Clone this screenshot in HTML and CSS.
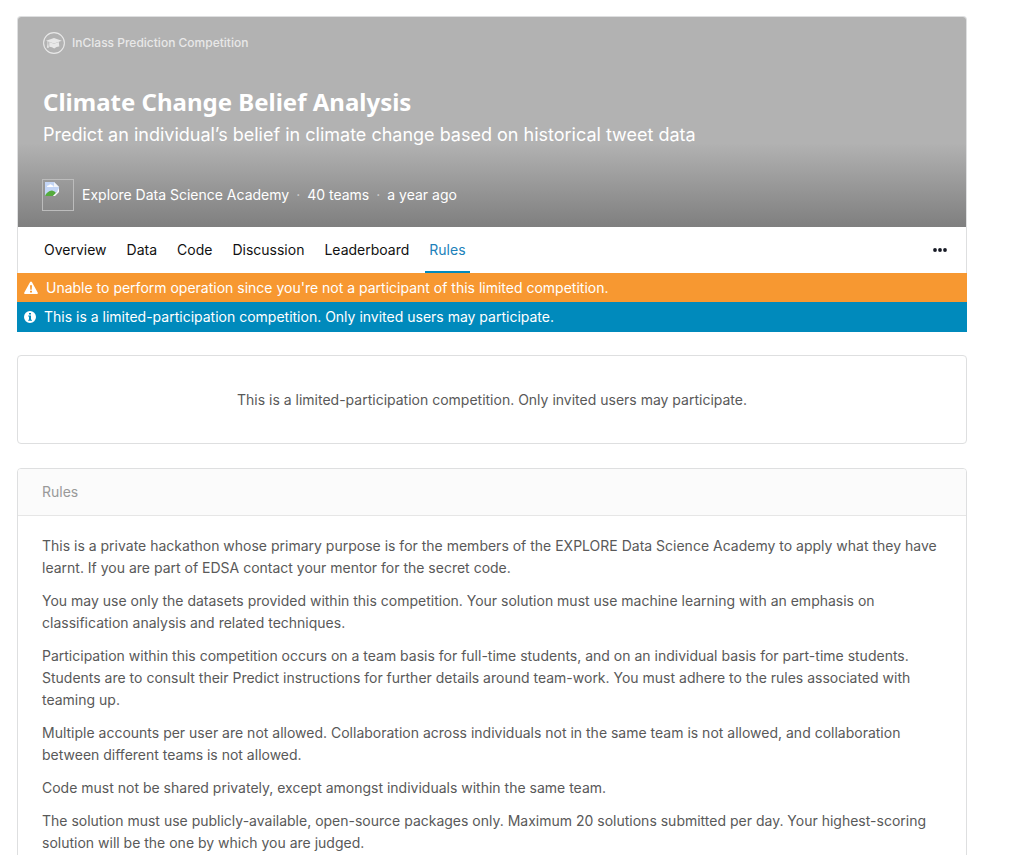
FILE: index.html
```html
<!DOCTYPE html>
<html lang="en">
<head>
<meta charset="utf-8">
<title>Climate Change Belief Analysis</title>
<link rel="stylesheet" href="styles.css">
</head>
<body>
<main class="page">
  <section class="competition">
    <header class="hero">
      <div class="kind">
        <svg class="kind-icon" viewBox="0 0 22 22" aria-hidden="true"><circle cx="11" cy="11" r="10.4" fill="none" stroke="currentColor" stroke-width="1.1"/><path d="M11 6 18.8 8.7 11 11.4 5.3 9.5V11.8L5.9 15.8H3.9L4.5 11.8V9.2L3 8.7Z" fill="currentColor"/><path d="M6.3 10 11 11.7 15.8 10 16.3 14.6Q13.8 14.4 11.2 16.4 9 14.7 6.3 14.8Z" fill="currentColor"/></svg>
        <span>InClass Prediction Competition</span>
      </div>
      <h1 class="title">Climate Change Belief Analysis</h1>
      <p class="subtitle">Predict an individual’s belief in climate change based on historical tweet data</p>
      <div class="meta">
        <span class="avatar" role="img" aria-label="Organisation logo"><svg class="broken" viewBox="0 0 16 16" aria-hidden="true"><path d="M1 1H10L15 6V9L9 15H1Z" fill="#c3d5f5"/><path d="M3 6Q3 4 5 4.4 6 2 8 4.3 10 4.4 9.6 6Z" fill="#fff"/><path d="M1 15Q3 10 8 9.5 11 10 12 12L9 15Z" fill="#55ab3d"/><path d="M10 1V6H15Z" fill="#f3f5f8"/><path d="M15 7V11L11 15H9L13 11Z" fill="#fff"/></svg></span>
        <a class="org" href="#">Explore Data Science Academy</a><span class="dot">·</span><span>40 teams</span><span class="dot">·</span><span>a year ago</span>
      </div>
    </header>
    <nav class="tabs">
      <a class="tab" href="#">Overview</a>
      <a class="tab" href="#">Data</a>
      <a class="tab" href="#">Code</a>
      <a class="tab" href="#">Discussion</a>
      <a class="tab" href="#">Leaderboard</a>
      <a class="tab active" href="#" aria-current="page">Rules</a>
      <button class="more" type="button" aria-label="More"><svg class="more-icon" viewBox="0 0 14 4" aria-hidden="true"><circle cx="2" cy="2" r="1.9"/><circle cx="7" cy="2" r="1.9"/><circle cx="12" cy="2" r="1.9"/></svg></button>
    </nav>
  </section>
  <div class="alert warning">
    <svg class="warning-icon" viewBox="0 0 14 14" aria-hidden="true"><path fill="currentColor" fill-rule="evenodd" d="M6.1 1Q7 0 7.9 1L13.8 11.7Q14.1 13 13 13H1Q-.1 13 .2 11.7ZM6 4.3 6.3 8.8H7.7L8 4.3ZM6 9.7V11.6H8V9.7Z"/></svg>
    <span>Unable to perform operation since you're not a participant of this limited competition.</span>
  </div>
  <div class="alert info">
    <svg class="info-icon" viewBox="0 0 12 12" aria-hidden="true"><path fill="currentColor" fill-rule="evenodd" d="M6 0A6 6 0 1 1 6 12A6 6 0 1 1 6 0ZM5 2V3.6H7V2ZM4.2 4.6V5.6H5V8.7H4.2V9.8H8V8.7H7V4.6Z"/></svg>
    <span>This is a limited-participation competition. Only invited users may participate.</span>
  </div>
  <section class="card notice">This is a limited-participation competition. Only invited users may participate.</section>
  <section class="card">
    <h2 class="card-title">Rules</h2>
    <div class="rules">
      <p>This is a private hackathon whose primary purpose is for the members of the EXPLORE Data Science Academy to apply what they have learnt. If you are part of EDSA contact your mentor for the secret code.</p>
      <p>You may use only the datasets provided within this competition. Your solution must use machine learning with an emphasis on classification analysis and related techniques.</p>
      <p>Participation within this competition occurs on a team basis for full-time students, and on an individual basis for part-time students. Students are to consult their Predict instructions for further details around team-work. You must adhere to the rules associated with teaming up.</p>
      <p>Multiple accounts per user are not allowed. Collaboration across individuals not in the same team is not allowed, and collaboration between different teams is not allowed.</p>
      <p>Code must not be shared privately, except amongst individuals within the same team.</p>
      <p>The solution must use publicly-available, open-source packages only. Maximum 20 solutions submitted per day. Your highest-scoring solution will be the one by which you are judged.</p>
    </div>
  </section>
</main>
</body>
</html>
```
FILE: styles.css
```css
* { box-sizing: border-box; }
html { scrollbar-width: none; }
body {
  margin: 0;
  background: #fff;
  color: #595959;
  font: 14px/22px Inter, "Liberation Sans", sans-serif;
}
h1, h2, p { margin: 0; }
a { color: inherit; text-decoration: none; }
svg { display: block; flex: none; }

.page { margin: 16px 68px 0 17px; }
.competition {
  border: 1px solid #dedfe0;
  border-bottom: 0;
  border-radius: 4px 4px 0 0;
  overflow: hidden;
}
.hero {
  padding: 15px 24px 16px;
  color: #fff;
  background: linear-gradient(#b2b2b2 0 60%, #7f7f7f 100%);
}
.kind {
  display: flex;
  align-items: center;
  gap: 7px;
  margin-left: 1px;
  color: #e8e8e8;
  font-size: 12px;
  font-weight: 500;
}
.kind-icon { width: 22px; height: 22px; }
.title {
  margin: 32px 1px 0;
  font: 700 24px/32px "Noto Sans", sans-serif;
}
.subtitle { margin: 5px 1px 0; font-size: 18px; line-height: 24px; }
.meta { display: flex; align-items: center; margin-top: 32px; }
.avatar {
  width: 32px;
  height: 32px;
  padding: 1px;
  border: 1px solid #bcbcbc;
}
.broken { width: 16px; height: 16px; }
.org { margin-left: 8px; }
.dot { width: 18px; text-align: center; color: #d0d0d0; }

.tabs { display: flex; height: 46px; padding: 0 12px 0 22px; gap: 12px; color: #111; }
.tab { padding: 12px 4px 10px; border-bottom: 2px solid transparent; }
.active { color: #2081ba; border-color: #008abc; }
.more {
  display: flex;
  align-items: center;
  margin-left: auto;
  padding: 0 7px;
  border: 0;
  background: none;
  color: #181b26;
}
.more-icon { width: 14px; height: 4px; fill: currentColor; }

.alert {
  display: flex;
  align-items: center;
  color: #fff;
}
.warning { gap: 8px; padding: 4px 7px 3px; background: #f79831; }
.info { gap: 8px; padding: 4px 7px; background: #008abc; }
.warning-icon { width: 14px; height: 14px; }
.info-icon { width: 12px; height: 12px; }

.card {
  margin-top: 24px;
  border: 1px solid #dedfe0;
  border-radius: 4px;
  overflow: hidden;
}
.notice { margin-top: 23px; padding: 33px 24px 32px; text-align: center; }
.card-title {
  padding: 12px 24px;
  border-bottom: 1px solid #e6e6e6;
  background: #fbfbfb;
  color: #999;
  font-size: 14px;
  font-weight: 400;
}
.rules { padding: 19px 24px; }
.rules p + p { margin-top: 11px; }
```
